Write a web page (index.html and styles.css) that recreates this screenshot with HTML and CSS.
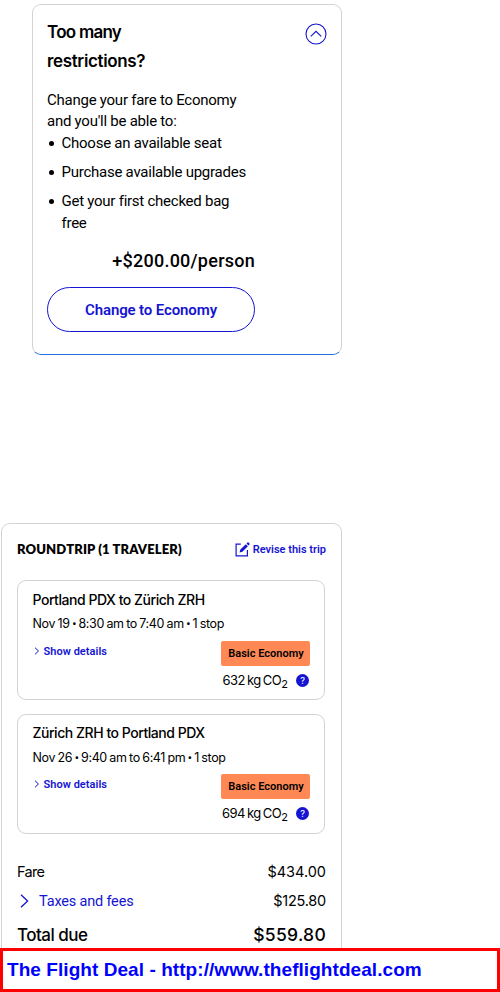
FILE: index.html
```html
<!DOCTYPE html>
<html lang="en">
<head>
<meta charset="utf-8">
<title>Trip summary</title>
<link rel="stylesheet" href="styles.css">
</head>
<body>
<main class="page">
  <section class="upgrade">
    <header class="upgrade-head">
      <h2 class="upgrade-title"><span class="tight">Too many</span><br><span>restrictions?</span></h2>
      <svg class="collapse" viewBox="0 0 22 22"><circle cx="11" cy="11" r="10"/><path d="M5.8 13.3 11 8.3l5.2 5"/></svg>
    </header>
    <p class="upgrade-text">Change your fare to Economy<br>and you'll be able to:</p>
    <ul class="perks">
      <li>Choose an available seat</li>
      <li>Purchase available upgrades</li>
      <li>Get your first checked bag<br>free</li>
    </ul>
    <div class="price">+$200.00/person</div>
    <button class="change">Change to Economy</button>
  </section>

  <section class="trip">
    <header class="trip-head">
      <h2 class="trip-title">ROUNDTRIP (1 TRAVELER)</h2>
      <a class="revise"><svg class="edit" viewBox="0 0 15 15"><path class="edit-box" d="M5.8 2.1H1.1v11.8h11.3V8"/><path class="edit-pen" d="M4.6 10.6l.7-3 5.6-5.4 2 2-5.5 5.6zM11.5 1.6l1-1q.5-.5 1 0l1 1q.5.5 0 1l-1 1z"/></svg><span>Revise this trip</span></a>
    </header>
    <article class="leg">
      <h3 class="route">Portland PDX to Zürich ZRH</h3>
      <p class="times">Nov 19 <b>•</b> 8:30 am to 7:40 am <b>•</b> 1 stop</p>
      <div class="leg-foot">
        <a class="details"><svg class="chev" viewBox="0 0 6 8"><path d="M1 .7 4.5 4 1 7.3"/></svg><span>Show details</span></a>
        <div class="fare-info">
          <span class="badge">Basic Economy</span>
          <div class="co"><span class="kg">632 kg CO</span><span class="two">2</span><span class="help">?</span></div>
        </div>
      </div>
    </article>
    <article class="leg return">
      <h3 class="route">Zürich ZRH to Portland PDX</h3>
      <p class="times">Nov 26 <b>•</b> 9:40 am to 6:41 pm <b>•</b> 1 stop</p>
      <div class="leg-foot">
        <a class="details"><svg class="chev" viewBox="0 0 6 8"><path d="M1 .7 4.5 4 1 7.3"/></svg><span>Show details</span></a>
        <div class="fare-info">
          <span class="badge">Basic Economy</span>
          <div class="co"><span class="kg">694 kg CO</span><span class="two">2</span><span class="help">?</span></div>
        </div>
      </div>
    </article>
    <div class="row fare"><span class="fare-label">Fare</span><span>$434.00</span></div>
    <div class="row taxes"><a class="tax-link"><svg class="bigchev" viewBox="0 0 9 14"><path d="M1 .8 7.6 7 1 13.2"/></svg><span>Taxes and fees</span></a><span class="tax-amount">$125.80</span></div>
    <div class="row total"><span class="total-label">Total due</span><span class="total-amount">$559.80</span></div>
  </section>
  <footer class="banner">The Flight Deal - http://www.theflightdeal.com</footer>
</main>
</body>
</html>
```
FILE: styles.css
```css
* { box-sizing: border-box; }
body { margin: 0; background: #fff; color: #000; font-family: Roboto, "Liberation Sans", sans-serif; }
h2, h3, p, ul { margin: 0; padding: 0; }
.page { width: 500px; height: 992px; overflow: hidden; display: flex; flex-direction: column; white-space: nowrap; }

.upgrade { flex: none; width: 310px; height: 351px; margin: 4px 0 0 32px; padding: 13px 15px 0 14px; border: 1px solid #d3d3d3; border-bottom-color: #2470e4; border-radius: 9px; }
.upgrade-head { display: flex; justify-content: space-between; height: 58px; }
.upgrade-title { font: 600 17px/29px Inter, sans-serif; letter-spacing: -0.36px; }
.tight { letter-spacing: -0.75px; }
.collapse { width: 22px; height: 22px; margin: 4.5px -0.5px 0 0; fill: none; stroke: #1414d2; stroke-width: 1.1; }
.upgrade-text { margin-top: 14px; font-size: 15px; line-height: 21px; letter-spacing: -0.25px; }
.perks { list-style: none; font-size: 15px; line-height: 22px; letter-spacing: -0.25px; }
.perks li { position: relative; padding-left: 14.5px; margin-bottom: 7px; }
.perks li::before { content: ""; position: absolute; left: 2px; top: 9px; width: 5px; height: 5px; border-radius: 50%; background: #000; }
.price { width: 208px; margin-top: 15px; text-align: right; font: 500 18px/24px Roboto, sans-serif; letter-spacing: 0.25px; }
.change { display: block; width: 208px; height: 45px; margin-top: 14px; padding: 0; border: 1px solid #1414d2; border-radius: 23px; background: #fff; color: #1414d2; font: 600 15px/20px Roboto, sans-serif; letter-spacing: -0.12px; }

.trip { flex: none; width: 341px; height: 425px; margin: 168px 0 0 1px; padding: 15px 15px 0 15px; border: 1px solid #d3d3d3; border-bottom: 0; border-radius: 9px 9px 0 0; }
.trip-head { display: flex; justify-content: space-between; align-items: center; height: 20px; margin-bottom: 21px; }
.trip-title { font: 800 13px/20px Lato, sans-serif; letter-spacing: 0.14px; }
.revise { display: flex; align-items: center; gap: 3px; padding-top: 1px; color: #1414d2; font-size: 11px; font-weight: 600; line-height: 20px; }
.edit { width: 15px; height: 15px; margin-top: -1px; }
.edit-box { fill: none; stroke: #1414d2; stroke-width: 1.2; }
.edit-pen { fill: #1414d2; }
.leg { width: 308px; height: 120px; margin-bottom: 14px; padding: 9px 14px 0 14.5px; border: 1px solid #d3d3d3; border-radius: 9px; }
.route { font: 500 14px/20px Inter, sans-serif; letter-spacing: -0.46px; }
.times { margin-top: 4px; font: 400 12.5px/20px Inter, sans-serif; letter-spacing: -0.36px; word-spacing: -0.7px; }
.times b { font-family: Roboto, sans-serif; font-weight: 400; }
.leg-foot { display: flex; justify-content: space-between; margin-top: 7px; }
.return { padding-top: 8px; }
.return .times { margin-top: 5px; }
.return .leg-foot { margin-top: 6px; }
.details { display: flex; align-items: center; height: 20px; gap: 4px; padding-left: 1px; color: #1414d2; font-size: 11px; font-weight: 600; letter-spacing: 0.04px; }
.chev { width: 6px; height: 8px; margin-top: -1px; fill: none; stroke: #1414d2; stroke-width: 1; }
.fare-info { display: flex; flex-direction: column; align-items: flex-end; }
.badge { display: flex; align-items: center; justify-content: center; width: 89px; height: 25px; padding-left: 1px; border-radius: 2px; background: #ff8855; font-size: 11px; font-weight: 600; }
.co { display: flex; align-items: center; height: 20px; margin-top: 4px; padding-right: 1px; font: 400 13px/20px Inter, sans-serif; }
.kg { letter-spacing: -0.5px; word-spacing: -1.1px; }
.two { margin-top: 7px; font-size: 11px; }
.help { display: flex; align-items: center; justify-content: center; width: 13px; height: 13px; margin: 0 0 0 8px; border-radius: 50%; background: #1414d2; color: #fff; font: 500 9px/13px Inter, sans-serif; }
.row { display: flex; justify-content: space-between; align-items: center; font: 400 14.5px/20px Inter, sans-serif; }
.fare { margin-top: 28px; }
.fare-label { letter-spacing: -0.7px; }
.taxes { margin-top: 9px; }
.tax-amount { margin-top: -1px; letter-spacing: -0.25px; }
.total { margin-top: 10px; font-size: 17px; font-weight: 500; line-height: 26px; }
.total-label { letter-spacing: -0.52px; }
.total-amount { font-size: 17.5px; letter-spacing: 0.3px; }
.tax-link { display: flex; align-items: center; gap: 10px; padding: 1px 0 0 3px; color: #1414d2; font-family: Roboto, sans-serif; letter-spacing: -0.18px; }
.bigchev { width: 9px; height: 14px; margin-top: -2px; fill: none; stroke: #1414d2; stroke-width: 1.3; }
.banner { flex: none; width: 500px; height: 44px; border: 3px solid #f00; background: #fff; padding-left: 4px; color: #00f; font: 700 19px/38px "Liberation Sans", sans-serif; letter-spacing: 0.06px; }
```
